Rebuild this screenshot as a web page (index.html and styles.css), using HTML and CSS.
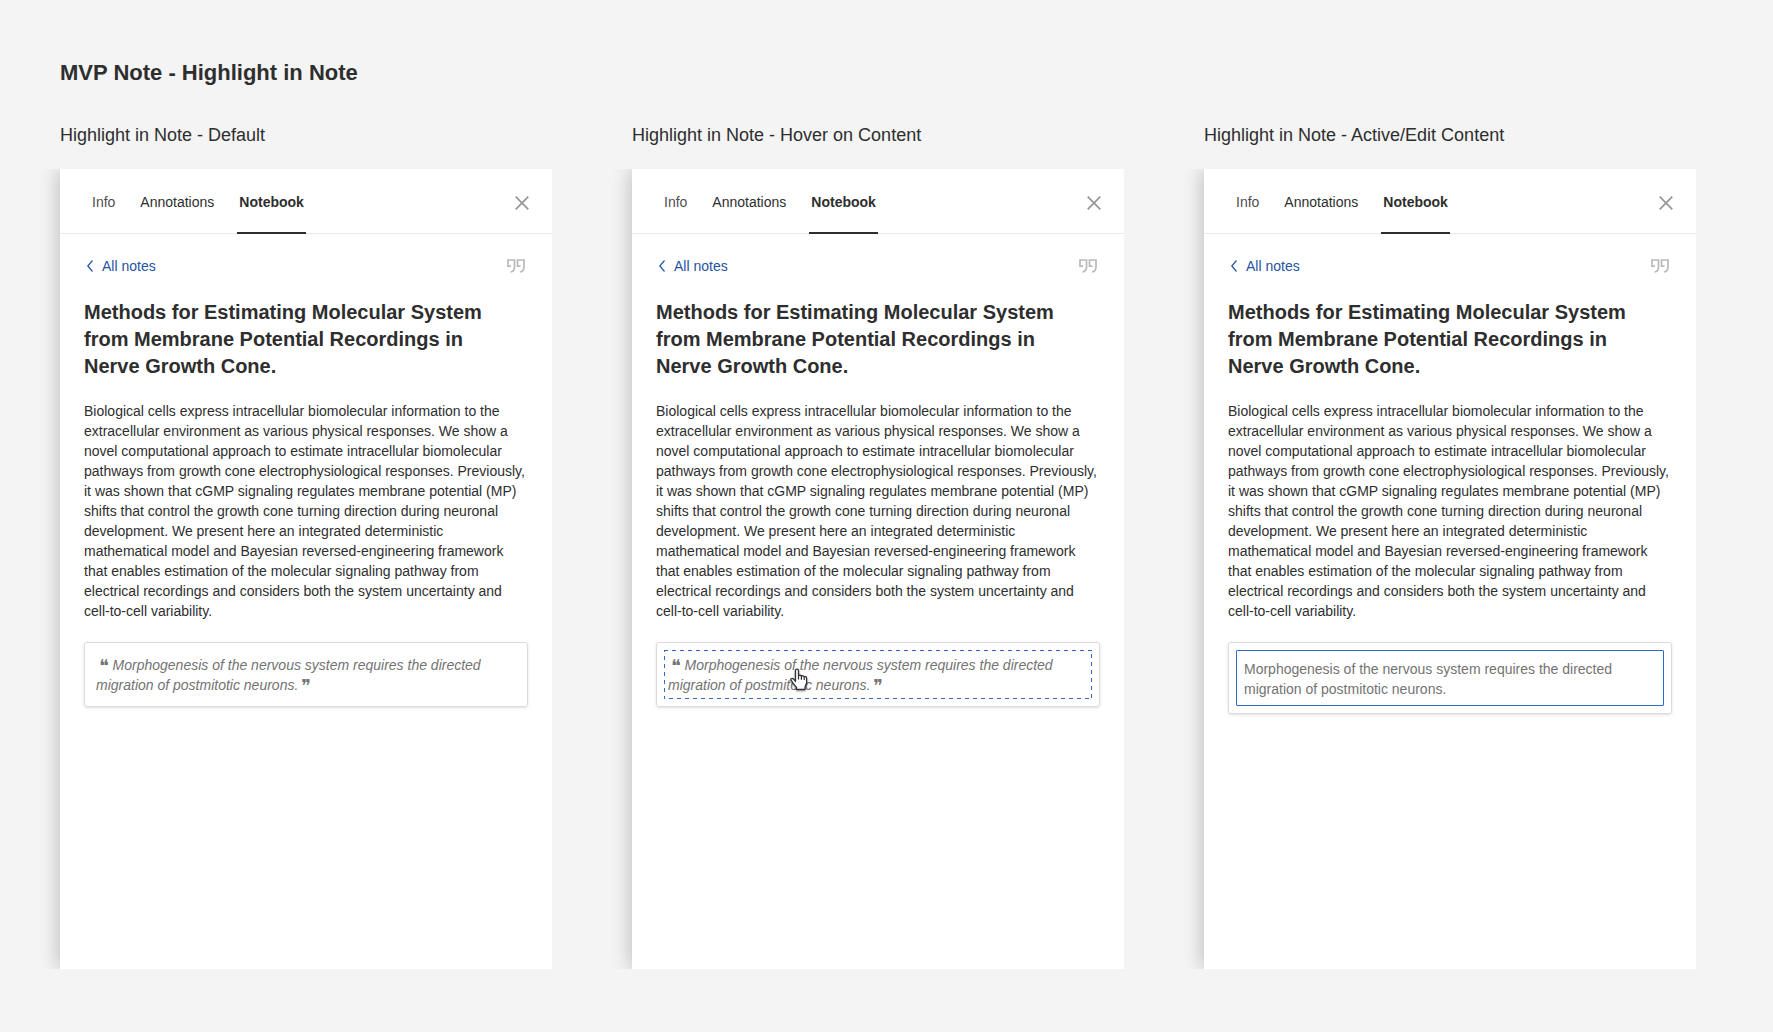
FILE: index.html
```
<!DOCTYPE html>
<html lang="en">
<head>
<meta charset="utf-8">
<title>MVP Note - Highlight in Note</title>
<meta name="viewport" content="width=device-width, initial-scale=1">
<link rel="stylesheet" href="styles.css">
</head>
<body>
<svg class="sprite" aria-hidden="true">
  <symbol id="icon-close" viewBox="0 0 14 14"><path d="M.7.7l12.6 12.6M13.3.7L.7 13.3" fill="none" stroke="currentColor" stroke-width="1.7"/></symbol>
  <symbol id="icon-back" viewBox="0 0 6 12"><path d="M5.500.5L.8 6l4.700 5.500" fill="none" stroke="currentColor" stroke-width="1.200"/></symbol>
  <symbol id="icon-quote" viewBox="0 0 18 14"><path d="M4 7.200H1V1h6.500v7c0 2.800-1.400 4.600-4 5M13.500 7.200h-3V1H17v7c0 2.800-1.400 4.600-4 5" fill="none" stroke="currentColor" stroke-width="1.700"/></symbol>
</svg>
<main class="board">
  <h1 class="board-title">MVP Note - Highlight in Note</h1>
  <div class="states">

    <section class="state">
      <h2 class="state-title">Highlight in Note - Default</h2>
      <article class="panel">
        <header class="panel-header">
          <nav class="tabs">
            <button class="tab tab-muted" type="button">Info</button>
            <button class="tab" type="button">Annotations</button>
            <button class="tab tab-active" type="button">Notebook</button>
          </nav>
          <button class="close" type="button" aria-label="Close"><svg class="icon-close"><use href="#icon-close"/></svg></button>
        </header>
        <div class="panel-body">
          <div class="toolbar">
            <a class="back" href="#"><svg class="icon-back"><use href="#icon-back"/></svg>All notes</a>
            <button class="quote-button" type="button" aria-label="Quote"><svg class="icon-quote"><use href="#icon-quote"/></svg></button>
          </div>
          <h3 class="note-title">Methods for Estimating Molecular System from Membrane Potential Recordings in Nerve Growth Cone.</h3>
          <p class="note-text">Biological cells express intracellular biomolecular information to the extracellular environment as various physical responses. We show a novel computational approach to estimate intracellular biomolecular pathways from growth cone electrophysiological responses. Previously, it was shown that cGMP signaling regulates membrane potential (MP) shifts that control the growth cone turning direction during neuronal development. We present here an integrated deterministic mathematical model and Bayesian reversed-engineering framework that enables estimation of the molecular signaling pathway from electrical recordings and considers both the system uncertainty and cell-to-cell variability.</p>
          <div class="card">
            <blockquote class="quote"><span class="mark">❝</span> Morphogenesis of the nervous system requires the directed migration of postmitotic neurons.<span class="mark">❞</span></blockquote>
          </div>
        </div>
      </article>
    </section>

    <section class="state">
      <h2 class="state-title">Highlight in Note - Hover on Content</h2>
      <article class="panel">
        <header class="panel-header">
          <nav class="tabs">
            <button class="tab tab-muted" type="button">Info</button>
            <button class="tab" type="button">Annotations</button>
            <button class="tab tab-active" type="button">Notebook</button>
          </nav>
          <button class="close" type="button" aria-label="Close"><svg class="icon-close"><use href="#icon-close"/></svg></button>
        </header>
        <div class="panel-body">
          <div class="toolbar">
            <a class="back" href="#"><svg class="icon-back"><use href="#icon-back"/></svg>All notes</a>
            <button class="quote-button" type="button" aria-label="Quote"><svg class="icon-quote"><use href="#icon-quote"/></svg></button>
          </div>
          <h3 class="note-title">Methods for Estimating Molecular System from Membrane Potential Recordings in Nerve Growth Cone.</h3>
          <p class="note-text">Biological cells express intracellular biomolecular information to the extracellular environment as various physical responses. We show a novel computational approach to estimate intracellular biomolecular pathways from growth cone electrophysiological responses. Previously, it was shown that cGMP signaling regulates membrane potential (MP) shifts that control the growth cone turning direction during neuronal development. We present here an integrated deterministic mathematical model and Bayesian reversed-engineering framework that enables estimation of the molecular signaling pathway from electrical recordings and considers both the system uncertainty and cell-to-cell variability.</p>
          <div class="card">
            <svg class="hover-frame" aria-hidden="true"><rect class="hover-rect" width="100%" height="100%"/></svg>
            <blockquote class="quote"><span class="mark">❝</span> Morphogenesis of the nervous system requires the directed migration of postmitotic neurons.<span class="mark">❞</span></blockquote>
            <svg class="pointer" viewBox="0 0 20 24" aria-hidden="true"><path d="M6.500 13.500V2.500c0-1.900 3-1.900 3 0V8c.3-1.200 2.700-1.100 2.900.4.500-1.100 2.600-.8 2.800.8.600-1 2.400-.6 2.400 1v4.300c0 1.700-1.600 3.300-1.600 4.700v2.300H7.500v-2c-1-1.600-3.300-3.500-4.200-5.500-.8-1.200-2-2.200-1.300-3.100 1.400-1.400 3.300.5 4.500 2.600z" fill="#fff" stroke="#333" stroke-width="1.300" stroke-linejoin="round"/><path d="M9.500 8v3.500M12.400 8.400v3.300M15.200 9.200v2.800" stroke="#333" stroke-width="1.200"/></svg>
          </div>
        </div>
      </article>
    </section>

    <section class="state">
      <h2 class="state-title">Highlight in Note - Active/Edit Content</h2>
      <article class="panel">
        <header class="panel-header">
          <nav class="tabs">
            <button class="tab tab-muted" type="button">Info</button>
            <button class="tab" type="button">Annotations</button>
            <button class="tab tab-active" type="button">Notebook</button>
          </nav>
          <button class="close" type="button" aria-label="Close"><svg class="icon-close"><use href="#icon-close"/></svg></button>
        </header>
        <div class="panel-body">
          <div class="toolbar">
            <a class="back" href="#"><svg class="icon-back"><use href="#icon-back"/></svg>All notes</a>
            <button class="quote-button" type="button" aria-label="Quote"><svg class="icon-quote"><use href="#icon-quote"/></svg></button>
          </div>
          <h3 class="note-title">Methods for Estimating Molecular System from Membrane Potential Recordings in Nerve Growth Cone.</h3>
          <p class="note-text">Biological cells express intracellular biomolecular information to the extracellular environment as various physical responses. We show a novel computational approach to estimate intracellular biomolecular pathways from growth cone electrophysiological responses. Previously, it was shown that cGMP signaling regulates membrane potential (MP) shifts that control the growth cone turning direction during neuronal development. We present here an integrated deterministic mathematical model and Bayesian reversed-engineering framework that enables estimation of the molecular signaling pathway from electrical recordings and considers both the system uncertainty and cell-to-cell variability.</p>
          <div class="card card-edit">
            <textarea class="editor" rows="2" aria-label="Highlight text">Morphogenesis of the nervous system requires the directed migration of postmitotic neurons.</textarea>
          </div>
        </div>
      </article>
    </section>

  </div>
</main>
</body>
</html>
```
FILE: styles.css
```
* { box-sizing: border-box; }

body {
  margin: 0;
  background: #f4f4f4;
  color: #2e2e2e;
  font: 14px/20px "Liberation Sans", Arial, sans-serif;
}

h1, h2, h3, p, blockquote { margin: 0; }

button {
  border: 0;
  padding: 0;
  background: none;
  color: inherit;
  font: inherit;
}

.sprite { display: none; }

.board { padding: 59px 77px 60px 60px; }

.board-title { font-size: 22px; line-height: 28px; }

.states {
  display: grid;
  grid-template-columns: repeat(3, minmax(0, 1fr));
  gap: 80px;
  margin-top: 36px;
}

.state-title {
  margin-bottom: 21px;
  font-size: 18px;
  font-weight: 400;
  line-height: 25px;
}

.panel {
  min-height: 800px;
  background: #fff;
  box-shadow: 0 0 20px rgba(0, 0, 0, .26);
  clip-path: inset(0 0 0 -20px);
}

.panel-header {
  display: flex;
  justify-content: space-between;
  height: 65px;
  padding: 0 23px 0 30px;
  border-bottom: 1px solid #e9e9e9;
}

.tabs { display: flex; gap: 21px; height: 65px; }

.tab {
  padding: 2px 2px 0;
  border-bottom: 2px solid transparent;
}

.tab-muted { color: #505050; }

.tab-active {
  border-color: #2e2e2e;
  font-weight: 700;
}

.close { padding-top: 4px; color: #969696; }

.icon-close { display: block; width: 14px; height: 14px; }

.panel-body { padding: 22px 24px; }

.toolbar {
  display: flex;
  align-items: center;
  justify-content: space-between;
  padding: 0 3px;
}

.back {
  display: flex;
  align-items: center;
  gap: 9px;
  color: #2653a3;
  text-decoration: none;
}

.icon-back { width: 6px; height: 12px; }

.quote-button { color: #b9b9b9; }

.icon-quote { display: block; width: 18px; height: 14px; }

.note-title {
  margin-top: 23px;
  padding-right: 24px;
  font-size: 20px;
  line-height: 27px;
}

.note-text { margin-top: 21px; }

.card {
  position: relative;
  margin-top: 21px;
  padding: 12px 11px 11px;
  border: 1px solid #dcdcdc;
  border-radius: 3px;
  box-shadow: 0 1px 3px rgba(0, 0, 0, .12);
}

.quote { color: #737373; font-style: italic; }

.mark {
  display: inline-block;
  margin-left: 3px;
  font-family: "DejaVu Sans", sans-serif;
  font-size: 18px;
  line-height: 16px;
  vertical-align: -2px;
}

.hover-frame {
  position: absolute;
  inset: 7px;
  width: calc(100% - 14px);
  height: calc(100% - 14px);
}

.hover-rect {
  fill: none;
  stroke: #2f6bc7;
  stroke-width: 2;
  stroke-dasharray: 4 4;
}

.pointer {
  position: absolute;
  top: 25px;
  left: 132px;
  width: 20px;
  height: 24px;
  filter: drop-shadow(0 1px 1px rgba(0, 0, 0, .4));
}

.card-edit { padding: 7px; }

.editor {
  display: block;
  width: 100%;
  height: 56px;
  padding: 8px 7px;
  border: 1px solid #2f6bc7;
  border-radius: 1px;
  outline: 0;
  background: #fff;
  color: #737373;
  font: inherit;
  resize: none;
  overflow: hidden;
}
```
